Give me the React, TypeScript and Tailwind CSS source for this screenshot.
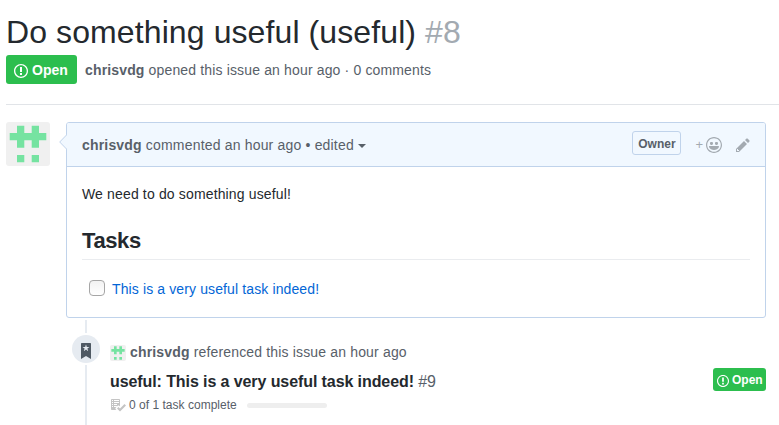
import React from "react";

type IconProps = { className?: string };

const IssueOpened = ({ className }: IconProps) => (
  <svg viewBox="0 0 14 16" className={className} fill="currentColor">
    <path fillRule="evenodd" d="M7 2.3c3.14 0 5.7 2.56 5.7 5.7s-2.56 5.7-5.7 5.7A5.71 5.71 0 0 1 1.3 8c0-3.14 2.56-5.7 5.7-5.7zM7 1C3.14 1 0 4.14 0 8s3.14 7 7 7 7-3.14 7-7-3.14-7-7-7zm1 3H6v5h2V4zm0 6H6v2h2v-2z" />
  </svg>
);

const Pencil = ({ className }: IconProps) => (
  <svg viewBox="0 0 14 16" className={className} fill="currentColor">
    <path fillRule="evenodd" d="M0 12v3h3l8-8-3-3-8 8zm3 2H1v-2h1v1h1v1zm10.3-9.3L12 6 9 3l1.3-1.3a.996.996 0 0 1 1.41 0l1.59 1.59c.39.39.39 1.02 0 1.41z" />
  </svg>
);

const Smiley = ({ className }: IconProps) => (
  <svg viewBox="0 0 16 16" className={className} fill="currentColor">
    <path fillRule="evenodd" d="M8 0C3.58 0 0 3.58 0 8s3.58 8 8 8 8-3.58 8-8-3.58-8-8-8zm4.81 12.81a6.72 6.72 0 0 1-2.17 1.45c-.83.36-1.72.53-2.64.53-.92 0-1.81-.17-2.64-.53-.81-.34-1.55-.83-2.17-1.45a6.773 6.773 0 0 1-1.45-2.17A6.59 6.59 0 0 1 1.21 8c0-.92.17-1.81.53-2.64.34-.81.83-1.55 1.45-2.17.62-.62 1.36-1.11 2.17-1.45A6.59 6.59 0 0 1 8 1.21c.92 0 1.81.17 2.64.53.81.34 1.55.83 2.17 1.45.62.62 1.11 1.36 1.45 2.17.36.83.53 1.72.53 2.64 0 .92-.17 1.81-.53 2.64-.34.81-.83 1.55-1.45 2.17zM4 6.8v-.59c0-.66.53-1.19 1.2-1.19h.59c.66 0 1.19.53 1.19 1.19v.59c0 .67-.53 1.2-1.19 1.2H5.2C4.53 8 4 7.47 4 6.8zm5 0v-.59c0-.66.53-1.19 1.2-1.19h.59c.66 0 1.19.53 1.19 1.19v.59c0 .67-.53 1.2-1.19 1.2h-.59C9.53 8 9 7.47 9 6.8zm4 3.2c-.72 1.88-2.91 3-5 3s-4.28-1.13-5-3c-.14-.39.23-1 .66-1h8.59c.41 0 .89.61.75 1z" />
  </svg>
);

const Bookmark = ({ className }: IconProps) => (
  <svg viewBox="0 0 10 16" className={className} fill="currentColor">
    <path fillRule="evenodd" d="M9 0H1C.27 0 0 .27 0 1v15l5-3.09L10 16V1c0-.73-.27-1-1-1zm-.78 4.25L6.36 5.61l.72 2.16c.06.22-.02.28-.2.17L5 6.6 3.12 7.94c-.19.11-.25.05-.2-.17l.72-2.16-1.86-1.36c-.17-.16-.14-.23.09-.23l2.3-.03.7-2.16h.25l.7 2.16 2.3.03c.23 0 .27.08.09.23z" />
  </svg>
);

const Checklist = ({ className }: IconProps) => (
  <svg viewBox="0 0 16 16" className={className} fill="currentColor">
    <path fillRule="evenodd" d="M16 8.5l-6 6-3-3L8.5 10l1.5 1.5L14.5 7 16 8.5zM5.7 12.2l.8.8H2c-.55 0-1-.45-1-1V3c0-.55.45-1 1-1h7c.55 0 1 .45 1 1v6.5l-.8-.8c-.39-.39-1.03-.39-1.42 0L5.7 10.8a.996.996 0 0 0 0 1.41v-.01zM4 4h5V3H4v1zm0 2h5V5H4v1zm0 2h3V7H4v1zM3 9H2v1h1V9zm0-2H2v1h1V7zm0-2H2v1h1V5zm0-2H2v1h1V3zm1 7h3V9H4v1z" />
  </svg>
);

const Avatar = ({ className }: IconProps) => (
  <svg viewBox="0 0 44 44" className={className}>
    <rect width="44" height="44" fill="#f0f0f0" />
    <path fill="#76e3a1" d="M11 3.7h7.3V11h7.4V3.7H33V11h7.3v7.3H33v7.4h-7.3v-7.4h-7.4v7.4H11v-7.4H3.7V11H11zM11 33h7.3v7.3H11zM25.7 33H33v7.3h-7.3z" />
  </svg>
);

const Notch = () => (
  <svg viewBox="0 0 8 16" className="absolute -left-2 top-[11px] h-4 w-2">
    <path d="M8 0.5 .7 8 8 15.5z" fill="#f1f8ff" />
    <path d="M8 .5.7 8 8 15.5" fill="none" stroke="#c0d3eb" />
  </svg>
);

export default function App() {
  return (
    <div className="h-[425px] w-[779px] overflow-hidden bg-white pl-1.5 font-['Liberation_Sans',Arial,sans-serif] text-sm leading-5 text-[#24292e]">
      <header className="h-[105px] border-b border-[#e1e4e8] pt-3">
        <h1 className="h-[43px] whitespace-nowrap text-[32px] leading-10 tracking-[0.1px]">
          Do something useful (useful) <span className="text-[#a3aab1]">#8</span>
        </h1>
        <div className="flex items-center text-[#586069]">
          <span className="mr-2 flex h-[29px] w-[71px] items-center rounded-[3px] bg-[#2cbe4e] pl-2 font-bold text-white">
            <IssueOpened className="mr-1 mt-[3px] h-4 w-3.5" />
            Open
          </span>
          <span className="tracking-[0.15px]">
            <b>chrisvdg</b> opened this issue an hour ago · 0 comments
          </span>
        </div>
      </header>

      <section className="mt-[17px] flex">
        <Avatar className="mr-4 size-11 rounded-[3px]" />
        <article className="relative h-[196px] w-[700px] rounded-[3px] border border-[#c0d3eb]">
          <Notch />
          <div className="flex h-11 items-center rounded-t-[2px] border-b border-[#c0d3eb] bg-[#f1f8ff] pl-[15px] text-[#586069]">
            <span className="tracking-[0.18px]">
              <b>chrisvdg</b> commented an hour ago • edited
            </span>
            <span className="ml-1 mt-0.5 border-x-4 border-t-4 border-x-transparent border-t-[#586069]" />
            <span className="mb-[3px] ml-auto mr-3.5 flex h-6 w-[49px] items-center justify-center rounded-[3px] border border-[#c0d3eb] pt-px text-xs font-bold">
              Owner
            </span>
            <span className="mr-[3px] text-[13px] text-[#a3aab1]">+</span>
            <Smiley className="mr-3.5 mt-px size-4 text-[#a3aab1]" />
            <Pencil className="mr-[15px] mt-px h-4 w-3.5 text-[#a3aab1]" />
          </div>
          <div className="px-[15px] pt-[17px]">
            <p className="tracking-[0.15px]">We need to do something useful!</p>
            <h2 className="mt-5 h-9 border-b border-[#eaecef] pt-px text-[22px] font-bold leading-8 tracking-[-0.4px]">Tasks</h2>
            <div className="mt-[19px] flex items-center pl-[7px]">
              <span className="mb-0.5 mr-[7px] size-4 rounded-[4px] border border-[#a6a6a6] bg-gradient-to-b from-[#f2f2f2] to-white" />
              <span className="tracking-[0.12px] text-[#0366d6]">This is a very useful task indeed!</span>
            </div>
          </div>
        </article>
      </section>

      <section className="ml-[66px] flex h-[107px]">
        <div className="mr-2.5 flex w-7 flex-col items-center pt-0.5">
          <div className="h-[13px] w-0.5 bg-[#e6ebf1]" />
          <div className="my-0.5 flex size-7 shrink-0 items-center justify-center rounded-full bg-[#e6ebf1] text-[#4f5963]">
            <Bookmark className="mt-1 h-4 w-2.5" />
          </div>
          <div className="w-0.5 flex-1 bg-[#e6ebf1]" />
        </div>
        <div className="w-[656px] pt-6">
          <div className="flex items-center text-[#586069]">
            <Avatar className="mr-1 mt-0.5 size-4 rounded-[2px]" />
            <span className="tracking-[0.16px]">
              <b>chrisvdg</b> referenced this issue an hour ago
            </span>
          </div>
          <div className="mt-1.5 flex h-[29px] items-start justify-between">
            <h3 className="pt-0.5 text-base leading-6 tracking-[-0.09px]">
              <b>useful: This is a very useful task indeed!</b> <span className="text-[#586069]">#9</span>
            </h3>
            <span className="flex h-[23px] w-[53px] items-center rounded-[3px] bg-[#2cbe4e] pl-1 text-xs font-bold text-white">
              <IssueOpened className="mr-[3px] mt-[3px] h-3.5 w-3" />
              Open
            </span>
          </div>
          <div className="flex items-center text-xs text-[#586069]">
            <Checklist className="mr-[3px] size-4 text-[#c4c4c4]" />
            <span className="tracking-[0.02px]">0 of 1 task complete</span>
            <span className="ml-2.5 h-[5px] w-20 rounded-full bg-[#eeeeee]" />
          </div>
        </div>
      </section>
    </div>
  );
}
